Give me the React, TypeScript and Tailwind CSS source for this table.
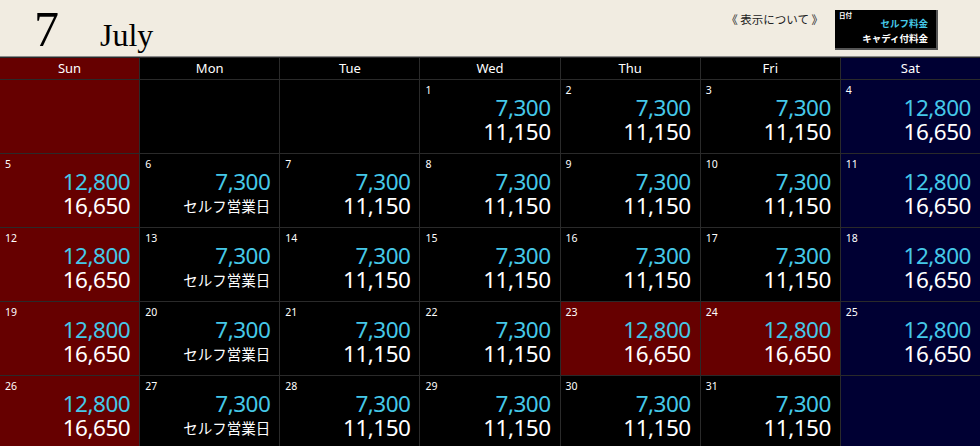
const days = ['Sun', 'Mon', 'Tue', 'Wed', 'Thu', 'Fri', 'Sat'];

type Cell = { day?: number; self?: string; caddie?: string; holiday?: boolean };

const weekday: Cell = { self: '7,300', caddie: '11,150' };
const weekend: Cell = { self: '12,800', caddie: '16,650' };
const selfDay: Cell = { self: '7,300', caddie: 'セルフ営業日' };

function buildCells(): Cell[] {
  const cells: Cell[] = [{}, {}, {}];
  for (let d = 1; d <= 31; d++) {
    const col = (d + 2) % 7;
    let c: Cell;
    if (col === 0 || col === 6) c = weekend;
    else if (col === 1 && d > 1) c = selfDay;
    else c = weekday;
    if (d === 23 || d === 24) c = { ...weekend, holiday: true };
    cells.push({ ...c, day: d });
  }
  cells.push({});
  return cells;
}

function cellBg(col: number, holiday?: boolean) {
  if (holiday || col === 0) return 'bg-[#660000]';
  if (col === 6) return 'bg-[#000033]';
  return 'bg-black';
}

export default function App() {
  const cells = buildCells();
  return (
    <div className="w-[980px] h-[446px] overflow-hidden bg-black font-['Noto_Sans','Noto_Sans_CJK_JP',sans-serif]">
      <header className="h-[57px] bg-[#f1ece1] flex items-start border-b border-[#8a8a8a]">
        <div className="flex items-baseline pl-[34px] font-['Liberation_Serif',serif] text-black">
          <span className="text-[50px] leading-[58px]">7</span>
          <span className="text-[32px] ml-[41px]">July</span>
        </div>
        <div className="ml-auto flex items-start pt-[10px] pr-[42px]">
          <span className="text-[11.5px] text-[#222] mt-[1px] mr-[12px] font-['Noto_Sans_CJK_JP',sans-serif]">《 表示について 》</span>
          <div className="relative w-[103px] h-[40px] bg-black border-r-2 border-b-2 border-[#555] font-['Noto_Sans_CJK_JP',sans-serif]">
            <span className="absolute left-[4px] top-[1px] text-[6.5px] font-bold text-white">日付</span>
            <div className="flex flex-col items-end pr-[8px] pt-[6px] text-[9.5px] font-bold leading-[15px]">
              <span className="text-[#45c8e8]">セルフ料金</span>
              <span className="text-white">キャディ付料金</span>
            </div>
          </div>
        </div>
      </header>
      <div className="grid grid-cols-7 gap-px bg-[#2a2a2a] border-t border-[#2a2a2a] pb-px">
        {days.map((d, i) => (
          <div
            key={d}
            className={`${cellBg(i)} h-[21px] flex items-center justify-center text-white text-[13px]`}
          >
            {d}
          </div>
        ))}
        {cells.map((c, i) => {
          const col = i % 7;
          const long = c.caddie === 'セルフ営業日';
          return (
            <div key={i} className={`${cellBg(col, c.holiday)} h-[73px] flex flex-col pt-[4px]`}>
              {c.day && (
                <>
                  <span className="pl-[5px] text-[10.5px] leading-[12px] text-white">{c.day}</span>
                  <div className="flex flex-col items-end pr-[9px]">
                    <span className="text-[22.5px] leading-[24px] text-[#45c8e8] tracking-[-0.5px]">{c.self}</span>
                    <span
                      className={
                        long
                          ? "text-[14.5px] leading-[24px] text-white font-['Noto_Sans_CJK_JP',sans-serif]"
                          : 'text-[22.5px] leading-[24px] text-white tracking-[-0.5px]'
                      }
                    >
                      {c.caddie}
                    </span>
                  </div>
                </>
              )}
            </div>
          );
        })}
      </div>
    </div>
  );
}
